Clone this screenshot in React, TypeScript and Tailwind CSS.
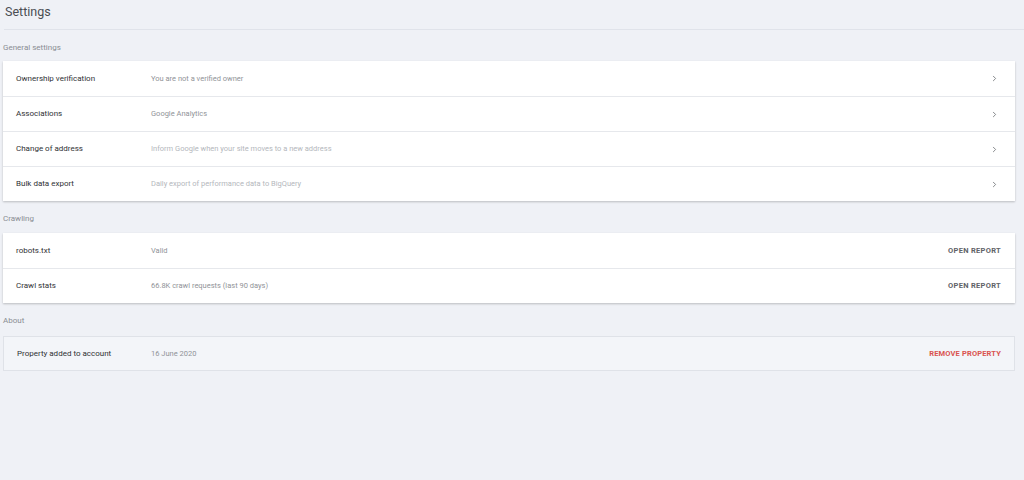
import { ChevronRight } from 'lucide-react'

type Row = { label: string; value: string; muted?: boolean }

const general: Row[] = [
    { label: 'Ownership verification', value: 'You are not a verified owner' },
    { label: 'Associations', value: 'Google Analytics' },
    { label: 'Change of address', value: 'Inform Google when your site moves to a new address', muted: true },
    { label: 'Bulk data export', value: 'Daily export of performance data to BigQuery', muted: true },
]

const crawling: Row[] = [
    { label: 'robots.txt', value: 'Valid' },
    { label: 'Crawl stats', value: '66.8K crawl requests (last 90 days)' },
]

function SectionTitle({ children, h }: { children: string; h: string }) {
    return <div className={`${h} pt-[13px] pl-[3px] text-[8px] leading-[10px] text-[#8a8d93]`}>{children}</div>
}

export default function App() {
    return (
        <div
            className="w-[1024px] h-[480px] bg-[#eff1f6] text-[#333]"
            style={{ fontFamily: 'Roboto, "Liberation Sans", sans-serif' }}
        >
            {/* Header */}
            <div className="h-[29px] pl-[5px] pt-[4px] text-[12.5px] leading-[15px] text-[#4a4d52]">Settings</div>
            <div className="ml-[4px] h-px bg-[#e0e3ea]" />

            <div className="pr-[9px]">
                <SectionTitle h="h-[31px]">General settings</SectionTitle>
                {/* General settings card */}
                <div className="ml-[3px] bg-white shadow-[0_1px_2px_rgba(0,0,0,0.22)]">
                    {general.map((r, i) => (
                        <div
                            key={r.label}
                            className={`flex items-center h-[35px] ${i > 0 ? 'border-t border-[#e6e8ec]' : ''}`}
                        >
                            <div className="w-[148px] pl-[13px] text-[8px] text-[#2f3134]">{r.label}</div>
                            <div className={`flex-1 text-[7.5px] ${r.muted ? 'text-[#b4b7bc]' : 'text-[#909398]'}`}>{r.value}</div>
                            <ChevronRight className="mr-[16px] w-[9px] h-[9px] text-[#6f7276]" strokeWidth={2.2} />
                        </div>
                    ))}
                </div>

                <SectionTitle h="h-[32px]">Crawling</SectionTitle>
                {/* Crawling card */}
                <div className="ml-[3px] bg-white shadow-[0_1px_2px_rgba(0,0,0,0.22)]">
                    {crawling.map((r, i) => (
                        <div
                            key={r.label}
                            className={`flex items-center h-[35px] ${i > 0 ? 'border-t border-[#e6e8ec]' : ''}`}
                        >
                            <div className="w-[148px] pl-[13px] text-[8px] text-[#2f3134]">{r.label}</div>
                            <div className="flex-1 text-[7.5px] text-[#909398]">{r.value}</div>
                            <div className="mr-[14px] text-[7.5px] font-bold tracking-[0.04em] text-[#5f6368]">OPEN REPORT</div>
                        </div>
                    ))}
                </div>

                <SectionTitle h="h-[33px]">About</SectionTitle>
                {/* About card */}
                <div className="ml-[3px] flex items-center h-[35px] border border-[#dfe2e8] bg-[#f3f5f9]">
                    <div className="w-[147px] pl-[13px] text-[8px] text-[#2f3134]">Property added to account</div>
                    <div className="flex-1 text-[7.5px] text-[#909398]">16 June 2020</div>
                    <div className="mr-[13px] text-[7.5px] font-bold tracking-[0.02em] text-[#d9534f]">REMOVE PROPERTY</div>
                </div>
            </div>
        </div>
    )
}
